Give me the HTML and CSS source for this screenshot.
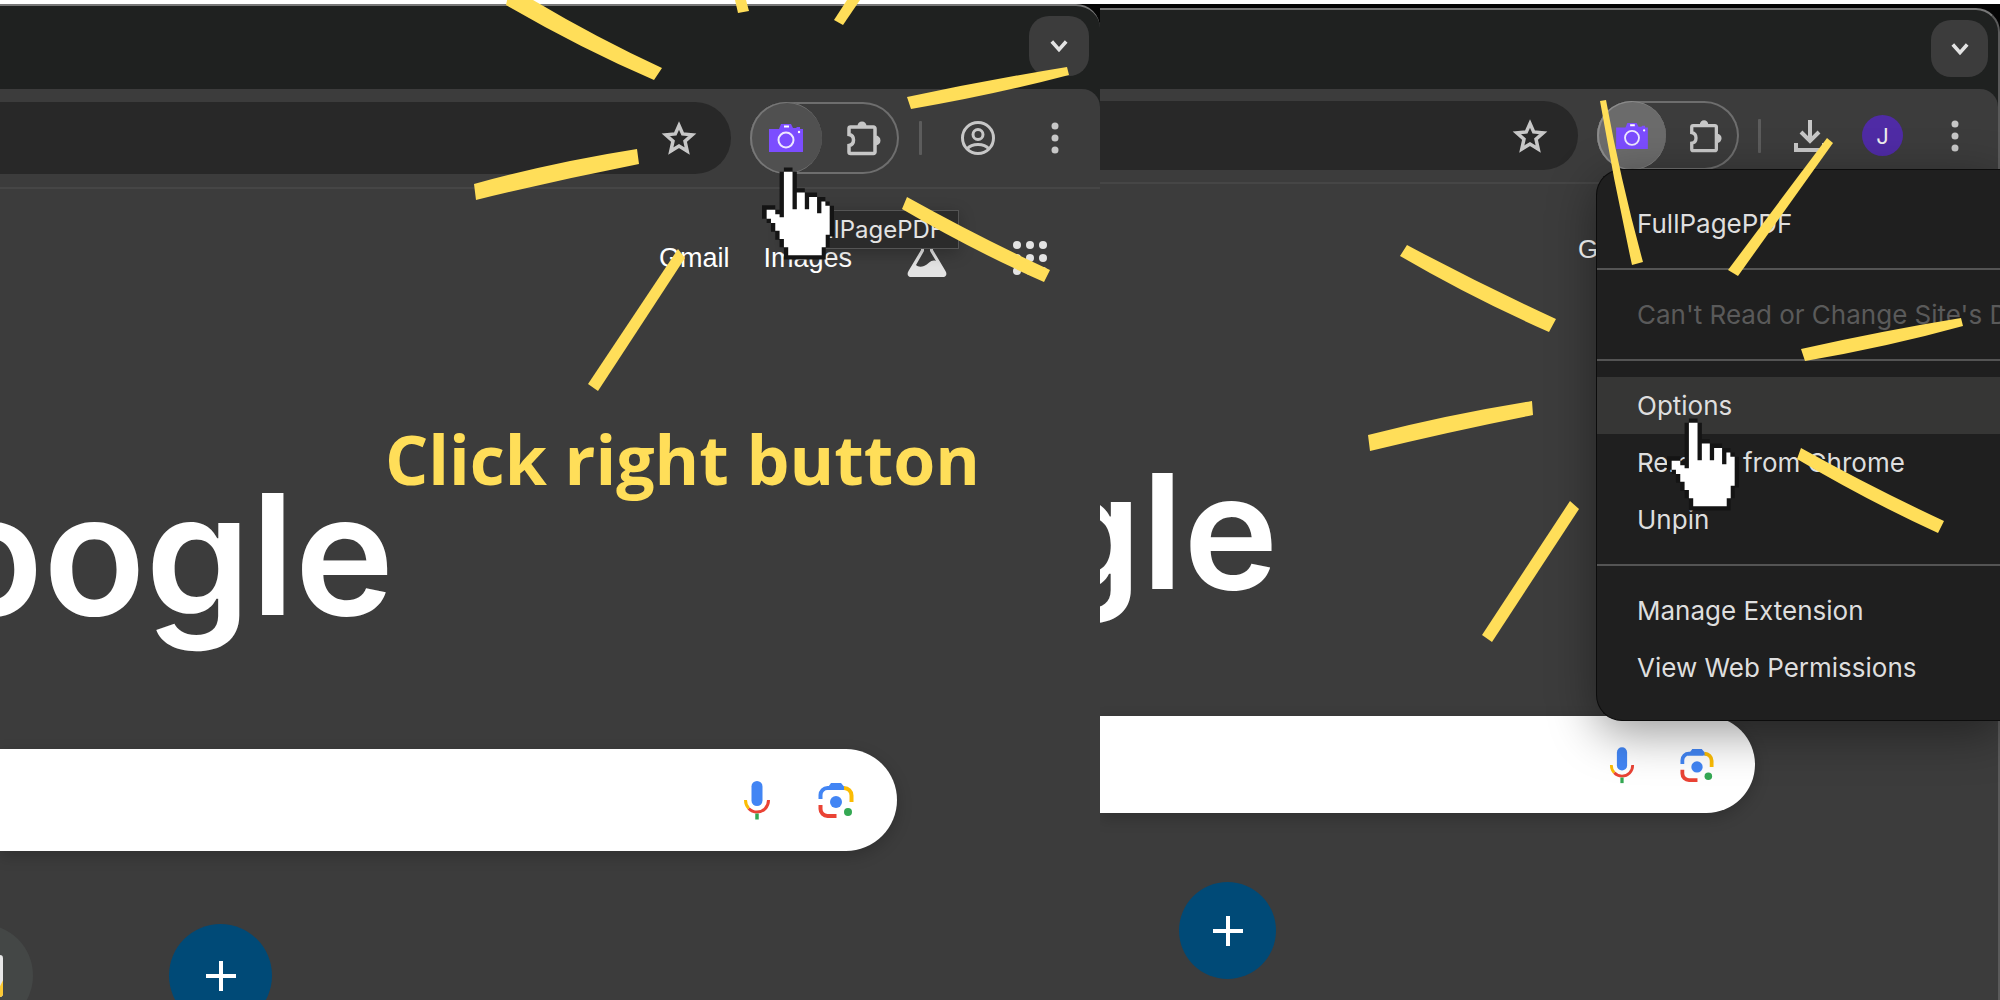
FILE: index.html
```html
<!DOCTYPE html>
<html lang="en">
<head>
<meta charset="utf-8">
<title>FullPagePDF – open the options</title>
<link rel="stylesheet" href="styles.css">
</head>
<body>
<svg class="defs" aria-hidden="true">
  <symbol id="chevron" viewBox="0 0 20 20"><path d="M2 5l8 9 8-9" fill="none" stroke="currentColor" stroke-width="4"/></symbol>
  <symbol id="star" viewBox="0 0 36 36"><path d="M18 5.500l3.700 8.400 9.500.9-7.200 6.400 2.200 9.800-8.200-5-8.200 5 2.200-9.800-7.200-6.400 9.500-.9z" fill="none" stroke="currentColor" stroke-width="3.500"/></symbol>
  <symbol id="camera" viewBox="0 0 36 30"><path d="M1 6h10l2-5h10l2 4h3l1-1h3v2h3v23H1z" fill="#7c4dff"/><circle cx="18" cy="17" r="7.500" fill="none" stroke="#eee8ff" stroke-width="2"/><path d="M16 3.500h5" stroke="#fff" stroke-width="2"/><circle cx="31" cy="9" r="1.200" fill="#fff"/></symbol>
  <symbol id="puzzle" viewBox="0 0 38 38"><path d="M6.500 8h23a1.500 1.500 0 0 1 1.500 1.500v23.500a1.500 1.500 0 0 1-1.500 1.500h-23a1.500 1.500 0 0 1-1.500-1.500v-6.500c6-1 6-10 0-11v-6a1.500 1.500 0 0 1 1.500-1.500z" fill="none" stroke="currentColor" stroke-width="3.500"/><path d="M13.500 7a4.500 4.500 0 0 1 9 0zM31.500 16.500a4.500 4.500 0 0 1 0 10z" fill="currentColor"/></symbol>
  <symbol id="dots" viewBox="0 0 8 34"><circle cx="4" cy="5" r="3.500"/><circle cx="4" cy="17" r="3.500"/><circle cx="4" cy="29" r="3.500"/></symbol>
  <symbol id="mic" viewBox="0 0 28 40"><rect x="8.500" y="1" width="11" height="25" rx="5.500" fill="#4285f4"/><path d="M2.500 20c0 3.500 1.200 6.300 3.200 8.400" fill="none" stroke="#fbbc04" stroke-width="3"/><path d="M25.500 20c0 7-5 12-11.500 12-3.300 0-6.200-1.300-8.300-3.600" fill="none" stroke="#ea4335" stroke-width="3"/><path d="M14 33.500v6" stroke="#34a853" stroke-width="3.500"/></symbol>
  <symbol id="lens" viewBox="0 0 36 36"><path d="M2.500 17v-4a7 7 0 0 1 7-7h15" fill="none" stroke="#4285f4" stroke-width="4"/><path d="M8 8l5-7h10l6 7z" fill="#4285f4"/><path d="M26 6a7.500 7.500 0 0 1 7.500 7.500v6.500" fill="none" stroke="#fbbc04" stroke-width="4"/><path d="M2.500 23v4a7 7 0 0 0 7 7h9" fill="none" stroke="#ea4335" stroke-width="4"/><circle cx="18" cy="20" r="6" fill="#4285f4"/><circle cx="30" cy="30" r="4" fill="#34a853"/></symbol>
  <symbol id="plus" viewBox="0 0 30 30"><path d="M15 0v30M0 15h30" stroke="#fff" stroke-width="4"/></symbol>
  <symbol id="hand" viewBox="66 262 217 278"><path fill="#141414" d="M132 262h26v13h13v50h24v13h37v13h25v14h13v13h13v92h-13v33h-12v37H132v-37h-13v-23h-13v-24H93v-26H80v-13H66v-41h40v14h13V275h13z"/><path fill="#fff" d="M132 275h26v113h13v-50h24v50h13v-37h24v49h13v-35h12v13h13v87h-12v38h-12v24H145v-24h-13v-25h-13v-25h-13v-23H93v-13H80v-27h26v13h13v9h13z"/></symbol>
</svg>

<main class="board">
  <section class="panel panel-hover">
    <div class="window">
      <header class="tabs">
        <button class="tab-search" aria-label="Search tabs"><svg class="i-chevron"><use href="#chevron"/></svg></button>
      </header>
      <div class="toolbar">
        <label class="omnibox"><input type="text" aria-label="Address"><svg class="i-star"><use href="#star"/></svg></label>
        <div class="extensions">
          <button class="ext active" aria-label="FullPagePDF"><svg class="i-camera"><use href="#camera"/></svg></button>
          <button class="ext" aria-label="Extensions"><svg class="i-puzzle"><use href="#puzzle"/></svg></button>
        </div>
        <span class="divider"></span>
        <button class="tool profile" aria-label="Profile"><svg viewBox="0 0 36 36"><g fill="none" stroke="currentColor" stroke-width="3"><circle cx="18" cy="18" r="15.500"/><circle cx="18" cy="14.500" r="5"/><path d="M7 29c5-6 17-6 22 0"/></g></svg></button>
        <button class="tool more" aria-label="More"><svg><use href="#dots"/></svg></button>
      </div>
      <div class="page">
        <nav class="links">
          <a href="#">Gmail</a>
          <a href="#">Images</a>
          <a class="labs" href="#" aria-label="Labs"><svg viewBox="0 0 40 40"><path d="M14 2h12v10l12.500 21c2 3.500.500 6-3 6H4.500c-3.500 0-5-2.500-3-6L14 12z" fill="#e3e3e3"/><path d="M17 4h6v9l6 10c-5-2-7 3-12 5-3 1-6 1-8-1l8-14z" fill="#3c3c3c"/></svg></a>
          <a class="apps" href="#" aria-label="Apps"><svg viewBox="0 0 34 34" fill="#e3e3e3"><circle cx="4" cy="4" r="4"/><circle cx="17" cy="4" r="4"/><circle cx="30" cy="4" r="4"/><circle cx="4" cy="17" r="4"/><circle cx="17" cy="17" r="4"/><circle cx="30" cy="17" r="4"/><circle cx="4" cy="30" r="4"/><circle cx="17" cy="30" r="4"/><circle cx="30" cy="30" r="4"/></svg></a>
        </nav>
        <div class="logo">Google</div>
        <label class="search"><input type="text" aria-label="Search"><svg class="i-mic"><use href="#mic"/></svg><svg class="i-lens"><use href="#lens"/></svg></label>
        <div class="shortcuts">
          <a class="shortcut site" href="#" aria-label="Site"><svg viewBox="0 0 40 40"><rect width="40" height="40" rx="3" fill="#e8e8e8"/><path d="M40 24v13a3 3 0 0 1-3 3h-5z" fill="#fcc934"/></svg></a>
          <button class="shortcut add" aria-label="Add shortcut"><svg><use href="#plus"/></svg></button>
        </div>
      </div>
    </div>
    <div class="tooltip" role="tooltip">FullPagePDF</div>
    <p class="callout">Click right button</p>
    <svg class="marks" viewBox="460 0 640 400" aria-hidden="true">
      <g fill="#ffde59">
        <path d="M506 5l4-18 23 13q64 38 129 68l-8 12Q580 48 506 5z"/>
        <path d="M735 0l3 13 11-2-3-11z"/>
        <path d="M847 0l-13 20 9 5 17-25z"/>
        <path d="M907 97q80-17 160-30l2 8q-76 20-158 34z"/>
        <path d="M474 184q80-22 163-35l2 15q-81 16-163 36z"/>
        <path d="M907 197q70 39 143 73l-6 12q-72-32-142-73z"/>
        <path d="M678 249l7 9-87 133-10-7z"/>
      </g>
      <use href="#hand" x="762" y="167" width="72" height="93"/>
    </svg>
  </section>

  <section class="panel panel-menu">
    <div class="window">
      <header class="tabs">
        <button class="tab-search" aria-label="Search tabs"><svg class="i-chevron"><use href="#chevron"/></svg></button>
      </header>
      <div class="toolbar">
        <label class="omnibox"><input type="text" aria-label="Address"><svg class="i-star"><use href="#star"/></svg></label>
        <div class="extensions">
          <button class="ext active" aria-label="FullPagePDF"><svg class="i-camera"><use href="#camera"/></svg></button>
          <button class="ext" aria-label="Extensions"><svg class="i-puzzle"><use href="#puzzle"/></svg></button>
        </div>
        <span class="divider"></span>
        <button class="tool download" aria-label="Downloads"><svg viewBox="0 0 34 34"><path d="M17 1v20M8 13l9 9 9-9M3 24v7h28v-7" fill="none" stroke="currentColor" stroke-width="4"/></svg></button>
        <button class="avatar">J</button>
        <button class="tool more" aria-label="More"><svg><use href="#dots"/></svg></button>
      </div>
      <div class="page">
        <nav class="links"><a href="#">Gmail</a></nav>
        <div class="logo">Google</div>
        <label class="search"><input type="text" aria-label="Search"><svg class="i-mic"><use href="#mic"/></svg><svg class="i-lens"><use href="#lens"/></svg></label>
        <div class="shortcuts">
          <button class="shortcut add" aria-label="Add shortcut"><svg><use href="#plus"/></svg></button>
        </div>
      </div>
    </div>
    <div class="menu" role="menu">
      <button role="menuitem">FullPagePDF</button>
      <hr>
      <button role="menuitem" disabled>Can't Read or Change Site's Data</button>
      <hr>
      <button role="menuitem" class="current">Options</button>
      <button role="menuitem">Remove from Chrome</button>
      <button role="menuitem">Unpin</button>
      <hr>
      <button role="menuitem">Manage Extension</button>
      <button role="menuitem">View Web Permissions</button>
    </div>
    <svg class="marks" viewBox="1360 0 640 700" aria-hidden="true">
      <g fill="#ffde59">
        <path d="M1407 245q73 39 149 74l-7 13q-77-34-149-76z"/>
        <path d="M1600 101l6-1q15 82 37 162l-11 3q-18-82-32-164z"/>
        <path d="M1827 138l6 5-95 133-10-6z"/>
        <path d="M1801 349q80-18 160-31l2 8q-76 21-158 35z"/>
        <path d="M1368 435q82-21 164-34l1 14q-81 16-163 36z"/>
        <path d="M1570 501l9 8-87 133-10-7z"/>
        <path d="M1801 448q70 39 143 73l-6 12q-72-33-141-74z"/>
      </g>
      <use href="#hand" x="1667" y="418" width="72" height="93"/>
    </svg>
  </section>
</main>
</body>
</html>
```
FILE: styles.css
```css
* { box-sizing: border-box; }
body { margin: 0; background: #fff; font-family: Inter, "Liberation Sans", sans-serif; overflow: hidden; }
button { border: 0; padding: 0; background: none; color: inherit; font: inherit; }
input { flex: 1; min-width: 0; border: 0; outline: 0; background: none; font: inherit; color: inherit; }
a { color: inherit; text-decoration: none; }
svg { display: block; }
.defs { position: absolute; width: 0; height: 0; }

.board { display: grid; grid-template-columns: 11fr 9fr; height: 100vh; }
.panel { position: relative; overflow: hidden; padding-top: 4px; background: linear-gradient(#fff 4px, #050505 4px); }
.window { min-height: 100%; border-top: 2px solid #777; border-top-right-radius: 24px; background: #1f2120; overflow: hidden; }

.tabs { display: flex; justify-content: flex-end; height: 83px; padding: 10px 11px 0 0; }
.tab-search { display: flex; align-items: center; justify-content: center; width: 60px; height: 60px; border-radius: 20px; background: #3c3c3c; color: #e3e3e3; }
.i-chevron { width: 18px; height: 18px; }

.toolbar { display: flex; align-items: center; height: 100px; padding-right: 41px; border-bottom: 2px solid #464646; border-top-right-radius: 18px; background: #3c3c3c; color: #c7c7c7; }
.omnibox { flex: 1; display: flex; align-items: center; height: 72px; margin-right: 19px; padding-right: 34px; border-radius: 0 36px 36px 0; background: #282828; }
.i-star { width: 36px; height: 36px; }
.extensions { display: flex; justify-content: space-between; width: 149px; height: 72px; border-radius: 36px; box-shadow: inset 0 0 0 2px #6e6e6e; }
.ext { display: flex; align-items: center; justify-content: center; width: 72px; border-radius: 50%; }
.ext.active { background: #505050; box-shadow: inset 1px 0 0 1px #777; }
.i-camera { width: 36px; height: 30px; }
.i-puzzle { width: 38px; height: 38px; }
.divider { width: 3px; height: 34px; margin-left: 20px; border-radius: 1px; background: #5c5c5c; }
.profile { margin-left: 38px; }
.profile svg { width: 36px; height: 36px; }
.more { margin-left: 55px; }
.more svg { width: 8px; height: 34px; fill: currentColor; }

.page { background: #3c3c3c; min-height: 900px; }
.links { display: flex; justify-content: flex-end; align-items: center; gap: 34px; padding: 49px 53px 0 0; font: 27px/34px "Liberation Sans", sans-serif; color: #fff; }
.links svg { overflow: visible; }
.labs { margin-left: 21px; }
.labs svg { width: 40px; height: 40px; }
.apps { margin-left: 32px; }
.apps svg { width: 34px; height: 34px; }
.logo { display: flex; justify-content: flex-end; margin-top: 176px; padding-right: 706px; font: 600 168px/200px Inter, "Liberation Sans", sans-serif; color: #fff; }
.search { display: flex; align-items: center; height: 102px; margin-top: 95px; margin-right: 203px; padding-right: 43px; border-radius: 0 51px 51px 0; background: #fff; box-shadow: 0 5px 16px rgba(0,0,0,.2); }
.i-mic { width: 28px; height: 40px; }
.i-lens { width: 36px; height: 36px; margin-left: 47px; }
.shortcuts { display: flex; gap: 136px; margin-top: 73px; margin-left: -70px; }
.shortcut { display: flex; align-items: center; justify-content: center; width: 103px; height: 103px; border-radius: 50%; }
.site { background: #444746; }
.site svg { width: 46px; height: 42px; }
.add { background: #004a77; }
.add svg { width: 30px; height: 30px; }

.tooltip { position: absolute; top: 210px; right: 141px; padding: 0 14px; border: 1px solid #555; background: #2b2b2b; color: #e3e3e3; font-size: 24px; line-height: 37px; box-shadow: 0 4px 16px rgba(0,0,0,.25); }
.callout { position: absolute; top: 413px; right: 120px; margin: 0; color: #ffde59; font: 700 68px/92px "Open Sans", sans-serif; white-space: nowrap; }
.marks { position: absolute; top: 0; right: 0; width: 640px; }

.panel-menu { padding-top: 8px; }
.panel-menu .window { border-right: 2px solid #5a5a5a; }
.panel-menu .tabs { height: 79px; padding-right: 10px; }
.panel-menu .tab-search { width: 57px; height: 57px; }
.panel-menu .toolbar { height: 95px; padding-right: 39px; }
.panel-menu .omnibox { height: 69px; padding-right: 30px; }
.panel-menu .extensions { width: 142px; height: 69px; }
.panel-menu .ext { width: 69px; }
.panel-menu .ext.active { background: #6b6b6b; box-shadow: inset 1px 0 0 1px #8b8b8b; }
.panel-menu .i-camera { width: 34px; height: 28px; }
.panel-menu .i-puzzle { width: 36px; height: 36px; }
.panel-menu .divider { margin-left: 19px; }
.download { margin-left: 32px; }
.download svg { width: 34px; height: 34px; }
.avatar { width: 41px; height: 41px; margin-left: 35px; border-radius: 50%; background: #4f2ba5; color: #eee; font-size: 22px; }
.panel-menu .more { margin-left: 48px; }
.panel-menu .links { padding: 49px 352px 0 0; font-size: 26px; line-height: 32px; }
.panel-menu .logo { margin-top: 171px; padding-right: 720px; font-size: 160px; line-height: 190px; }
.panel-menu .search { height: 97px; margin-top: 90px; margin-right: 243px; padding-right: 41px; }
.panel-menu .i-mic { width: 26px; height: 38px; }
.panel-menu .i-lens { width: 34px; height: 34px; margin-left: 45px; }
.panel-menu .shortcuts { margin: 69px 0 0 79px; }
.panel-menu .shortcut { width: 97px; height: 97px; }

.menu { position: absolute; top: 169px; right: 0; width: 404px; padding: 25px 0 24px; border: solid #0c0c0c; border-width: 1px 0 1px 1px; border-radius: 26px 0 0 26px; background: #1f1f1f; color: #dedede; box-shadow: 0 12px 48px rgba(0,0,0,.4); overflow: hidden; }
.menu button { display: block; width: 100%; height: 57px; padding-left: 40px; text-align: left; font-size: 26px; line-height: 57px; white-space: nowrap; }
.menu button:disabled { color: #5a5a5a; }
.menu .current { background: #363635; }
.menu hr { height: 2px; margin: 16px 0; border: 0; background: #545454; }
```
